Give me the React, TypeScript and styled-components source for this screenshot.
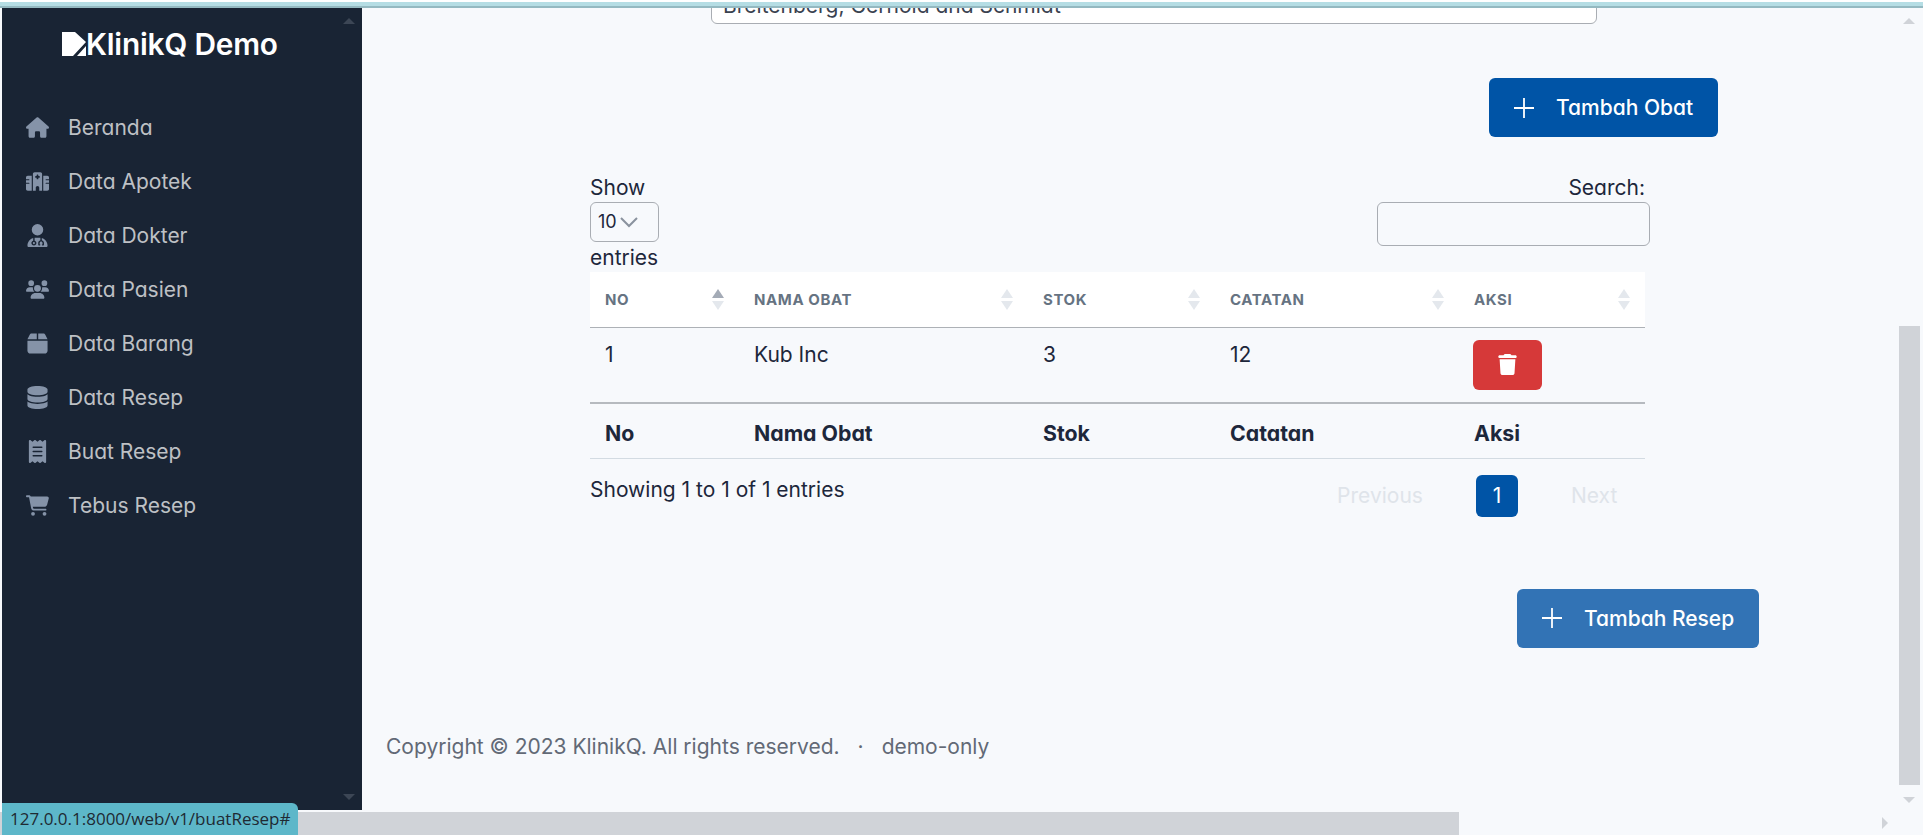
import React from "react";
import styled, { createGlobalStyle } from "styled-components";
import { FaHouse, FaHospital, FaUserDoctor, FaUsers, FaBox, FaDatabase, FaReceipt, FaCartShopping, FaTrash } from "react-icons/fa6";

const Global = createGlobalStyle`
  html, body { margin: 0; padding: 0; height: 100%; overflow: hidden; background: #f7f9fc; }
  * { box-sizing: border-box; }
  body { font-family: Inter, "Liberation Sans", sans-serif; color: #1d273b; font-feature-settings: "cv11" 1; }
`;

const Shell = styled.div`
  position: relative; width: 1923px; height: 835px; overflow: hidden;
  display: flex; flex-direction: column; background: #f7f9fc;
`;
const TopStrip = styled.div`
  flex: none; height: 8px; border-top: 2px solid #fff; border-bottom: 2px solid #94b9c1; background: #b5dde4;
  position: relative; z-index: 2;
`;
const Body = styled.div`flex: none; height: 802px; display: flex; padding-left: 2px;`;
const Sidebar = styled.aside`
  position: relative; flex: none; width: 360px; background: #192434; color: rgba(255,255,255,.72);
  display: flex; flex-direction: column; padding: 0 0 0 24px;
`;
const Brand = styled.div`
  display: flex; align-items: center; height: 56px; margin-top: 8px; padding-left: 36px;
  color: #fff; font-size: 29.8px; font-weight: 600; letter-spacing: -0.2px;
`;
const Nav = styled.nav`display: flex; flex-direction: column; margin-top: 28px;`;
const NavItem = styled.a`
  display: flex; align-items: center; height: 54px; font-size: 21px; font-weight: 400;
  color: rgba(255,255,255,.72);
`;
const NavIcon = styled.span`
  flex: none; width: 42px; display: flex; align-items: center; color: #8593a8;
  svg { width: auto; height: 23px; }
`;
const Arrow = styled.span<{ $dir: "up" | "down" | "right"; $color: string }>`
  position: absolute; width: 0; height: 0;
  ${(p) => p.$dir === "up" && `border-left:6px solid transparent;border-right:6px solid transparent;border-bottom:6px solid ${p.$color};`}
  ${(p) => p.$dir === "down" && `border-left:6px solid transparent;border-right:6px solid transparent;border-top:6px solid ${p.$color};`}
  ${(p) => p.$dir === "right" && `border-top:6px solid transparent;border-bottom:6px solid transparent;border-left:6px solid ${p.$color};`}
`;
const SideUp = styled(Arrow)`top: 10px; right: 7px;`;
const SideDown = styled(Arrow)`bottom: 10px; right: 7px;`;

const Main = styled.main`flex: 1; min-width: 0; display: flex; overflow: hidden;`;
const Content = styled.div`flex: 1; min-width: 0; display: flex; flex-direction: column;`;
const CompanyInput = styled.div`
  margin: -30px 0 0 349px; width: 886px; height: 46px; flex: none; background: #fff;
  border: 1px solid #a9adb3; border-radius: 6px; padding: 0 11px; font-size: 21px; line-height: 54px; color: #3a4250; overflow: hidden;
`;
const ActionRow = styled.div<{ $right: number; $top: number }>`
  display: flex; justify-content: flex-end; padding-right: ${(p) => p.$right}px; margin-top: ${(p) => p.$top}px;
`;
const PrimaryButton = styled.button<{ $bg: string; $w: number }>`
  display: flex; align-items: center; gap: 21px; padding: 0 0 0 24px; width: ${(p) => p.$w}px; height: 59px;
  background: ${(p) => p.$bg}; color: #fff; border: 0; border-radius: 6px; font: 500 21px Inter, sans-serif; font-feature-settings: "cv11" 1;
`;
const Plus = styled.svg`width: 22px; height: 22px; flex: none;`;
const TableWrap = styled.section`margin: 0 0 0 228px; width: 1060px;`;
const Controls = styled.div`display: flex; justify-content: space-between; margin-top: 35px; height: 100px; width: 1060px;`;
const LengthCtl = styled.div`display: flex; flex-direction: column; align-items: flex-start; font-size: 21px; line-height: 30px;`;
const ControlLabel = styled.span`display: block; height: 30px; padding-top: 1px;`;
const SelectBox = styled.div`
  width: 69px; height: 41px; margin: 0; border: 1px solid #a9adb3; border-radius: 6px; padding-left: 7px;
  display: flex; align-items: center; gap: 3px; font-size: 18px;
`;
const SearchCtl = styled.div`display: flex; flex-direction: column; align-items: flex-end; font-size: 21px; line-height: 30px;`;
const SearchLabel = styled(ControlLabel)`padding-right: 5px;`;
const SearchInput = styled.div`width: 273px; height: 44px; border: 1px solid #a9adb3; border-radius: 6px;`;
const Table = styled.table`
  width: 1055px; border-collapse: collapse; table-layout: fixed; font-size: 21px;
`;
const HeadCell = styled.th<{ $w: number }>`
  width: ${(p) => p.$w}px; height: 55px; padding: 0 15px; background: #fff; border-bottom: 1px solid #adb1b6; text-align: left;
`;
const HeadInner = styled.div`
  display: flex; justify-content: space-between; align-items: center;
  font-size: 15px; font-weight: 700; letter-spacing: 0.6px; color: #667382; text-transform: uppercase;
`;
const Carets = styled.span`display: flex; flex-direction: column; gap: 3px;`;
const Caret = styled.i<{ $up?: boolean; $on?: boolean }>`
  display: block; width: 0; height: 0; border-left: 6px solid transparent; border-right: 6px solid transparent;
  ${(p) => (p.$up ? "border-bottom" : "border-top")}: 9px solid ${(p) => (p.$on ? "#a4abb6" : "#e4e8ed")};
`;
const Cell = styled.td`
  height: 76px; padding: 12px 15px 0; vertical-align: top; line-height: 30px; border-bottom: 2px solid #b6babf;
`;
const FootCell = styled.td`
  height: 55px; padding: 5px 15px 0; font-weight: 700; font-size: 21.3px; border-bottom: 1px solid #d3dbe2;
`;
const DeleteBtn = styled.button`
  width: 69px; height: 50px; margin: 0 0 0 -1px; background: #d63939; border: 0; border-radius: 6px; color: #fff;
  display: flex; align-items: center; justify-content: center; font-size: 21px;
`;
const Bottom = styled.div`display: flex; justify-content: space-between; width: 1055px;`;
const Info = styled.div`font-size: 21px; line-height: 30px; padding-top: 16px;`;
const Pager = styled.div`display: flex; align-items: center; padding-top: 16px; font-size: 21px; color: #dfe4ea;`;
const PageLink = styled.span<{ $w: number }>`width: ${(p) => p.$w}px; text-align: center;`;
const PageOn = styled.span`
  width: 42px; height: 42px; background: #0054a6; color: #fff; border-radius: 6px; display: flex; align-items: center; justify-content: center; margin: 0 53px 0 52px;
`;
const Footer = styled.footer`
  display: flex; gap: 18px; margin: 84px 0 0 24px; font-size: 21px; color: #626976; line-height: 30px;
`;
const VTrack = styled.div`position: relative; flex: none; width: 24px; padding-top: 318px;`;
const VThumb = styled.div`width: 21px; height: 459px; background: #d0d3d8;`;
const VDown = styled(Arrow)`bottom: 7px; left: 4px;`;
const VUp = styled(Arrow)`top: 10px; left: 4px;`;
const HBar = styled.div`position: relative; flex: none; margin-top: 2px; height: 23px;`;
const HThumb = styled.div`width: 1459px; height: 23px; background: #d0d3d8;`;
const HRight = styled(Arrow)`top: 5px; left: 1882px;`;
const Status = styled.div`
  position: absolute; left: 2px; bottom: 0; width: 296px; height: 32px; background: #5db7c9; color: #1f2a33;
  border-top-right-radius: 6px; padding-left: 8px; font-size: 17px; line-height: 32px; font-family: "Open Sans", sans-serif;
`;

const PlusIcon = () => (
  <Plus viewBox="0 0 22 22"><path d="M11 1v20M1 11h20" stroke="#fff" strokeWidth="1.8" fill="none" /></Plus>
);

const items: [React.ComponentType, string][] = [
  [FaHouse, "Beranda"], [FaHospital, "Data Apotek"], [FaUserDoctor, "Data Dokter"], [FaUsers, "Data Pasien"],
  [FaBox, "Data Barang"], [FaDatabase, "Data Resep"], [FaReceipt, "Buat Resep"], [FaCartShopping, "Tebus Resep"],
];
const cols: [string, number][] = [["No", 149], ["Nama Obat", 289], ["Stok", 187], ["Catatan", 244], ["Aksi", 186]];

export default function App() {
  return (
    <Shell>
      <Global />
      <TopStrip />
      <Body>
        <Sidebar>
          <SideUp $dir="up" $color="#3c4655" />
          <Brand>
            <svg width="24" height="24" viewBox="0 0 24 24"><path d="M0 0h13L24 10 11 24H0zM24 14v10H15z" fill="#fff" /></svg>
            KlinikQ Demo
          </Brand>
          <Nav>
            {items.map(([Icon, label]) => (
              <NavItem key={label}><NavIcon><Icon /></NavIcon>{label}</NavItem>
            ))}
          </Nav>
          <SideDown $dir="down" $color="#3c4655" />
        </Sidebar>
        <Main>
          <Content>
            <CompanyInput>Breitenberg, Gerhold and Schmidt</CompanyInput>
            <ActionRow $right={181} $top={54}><PrimaryButton $bg="#0054a6" $w={229}><PlusIcon />Tambah Obat</PrimaryButton></ActionRow>
            <TableWrap>
              <Controls>
                <LengthCtl>
                  <ControlLabel>Show</ControlLabel>
                  <SelectBox>10<svg width="18" height="12" viewBox="0 0 18 12"><path d="M1 2l8 8 8-8" stroke="#8a929e" strokeWidth="2" fill="none" /></svg></SelectBox>
                  <ControlLabel>entries</ControlLabel>
                </LengthCtl>
                <SearchCtl><SearchLabel>Search:</SearchLabel><SearchInput /></SearchCtl>
              </Controls>
              <Table>
                <thead>
                  <tr>
                    {cols.map(([c, w], i) => (
                      <HeadCell key={c} $w={w}>
                        <HeadInner>{c}<Carets><Caret $up $on={i === 0} /><Caret /></Carets></HeadInner>
                      </HeadCell>
                    ))}
                  </tr>
                </thead>
                <tbody>
                  <tr>
                    <Cell>1</Cell><Cell>Kub Inc</Cell><Cell>3</Cell><Cell>12</Cell>
                    <Cell><DeleteBtn><FaTrash /></DeleteBtn></Cell>
                  </tr>
                  <tr>{cols.map(([c]) => <FootCell key={c}>{c}</FootCell>)}</tr>
                </tbody>
              </Table>
              <Bottom>
                <Info>Showing 1 to 1 of 1 entries</Info>
                <Pager><PageLink $w={88}>Previous</PageLink><PageOn>1</PageOn><PageLink $w={45}>Next</PageLink><PageLink $w={29} /></Pager>
              </Bottom>
            </TableWrap>
            <ActionRow $right={140} $top={72}><PrimaryButton $bg="#3273b5" $w={242}><PlusIcon />Tambah Resep</PrimaryButton></ActionRow>
            <Footer><span>Copyright © 2023 KlinikQ. All rights reserved.</span><span>·</span><span>demo-only</span></Footer>
          </Content>
          <VTrack>
            <VUp $dir="up" $color="#d0d3d8" />
            <VThumb />
            <VDown $dir="down" $color="#d0d3d8" />
          </VTrack>
        </Main>
      </Body>
      <HBar><HThumb /><HRight $dir="right" $color="#d0d3d8" /></HBar>
      <Status>127.0.0.1:8000/web/v1/buatResep#</Status>
    </Shell>
  );
}
